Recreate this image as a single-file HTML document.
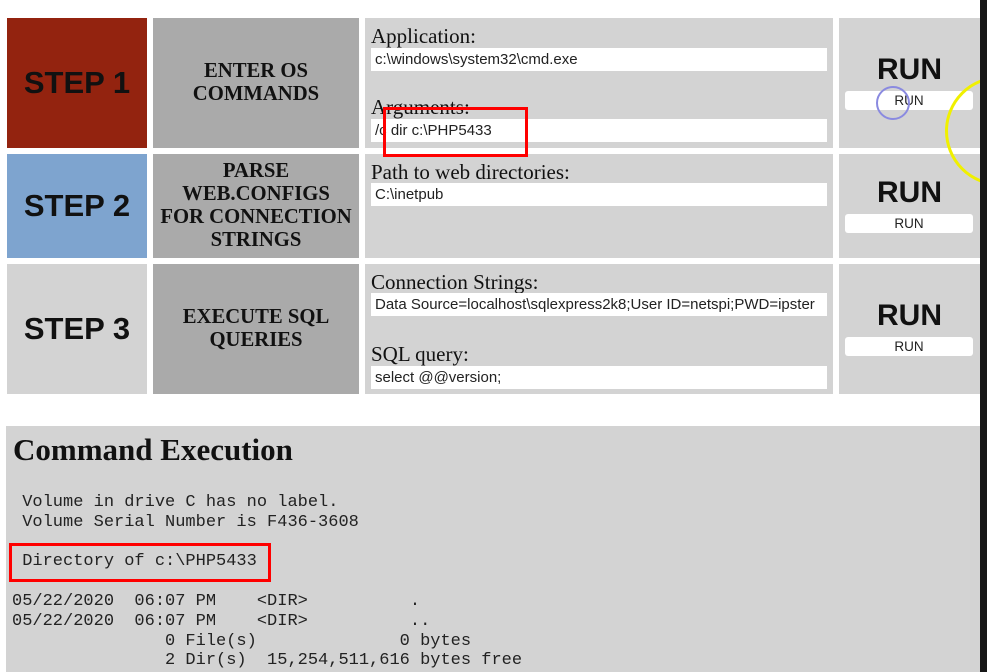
<!DOCTYPE html>
<html><head><style>
*{margin:0;padding:0;box-sizing:border-box}
body{width:987px;height:672px;background:#fff;position:relative;overflow:hidden;font-family:"Liberation Sans",sans-serif}
.a{position:absolute}
.step{font-weight:bold;font-size:31px;color:#111;display:flex;align-items:center;justify-content:center}
.desc{background:#aaaaaa;font-family:"Liberation Serif",serif;font-weight:bold;font-size:20.7px;line-height:23px;text-align:center;display:flex;align-items:center;justify-content:center;color:#111}
.mid{background:#d3d3d3}
.lab{font-family:"Liberation Serif",serif;font-size:21px;color:#111}
.inp{background:#fff;height:23px;font-size:15px;color:#222;padding-left:4px;line-height:23px;white-space:nowrap;overflow:hidden}
.run{font-weight:bold;font-size:30px;color:#111;text-align:center;width:141px}
.btn{background:#fff;border-radius:3px;width:128px;height:19px;font-size:13.5px;line-height:19px;text-align:center;color:#222}
pre{font-family:"Liberation Mono",monospace;font-size:17px;line-height:19.8px;color:#222}
</style></head><body>
<div class="a step" style="left:7px;top:18px;width:140px;height:130px;background:#93230f">STEP 1</div>
<div class="a step" style="left:7px;top:154px;width:140px;height:104px;background:#7ea4cf">STEP 2</div>
<div class="a step" style="left:7px;top:264px;width:140px;height:130px;background:#d3d3d3">STEP 3</div>
<div class="a desc" style="left:153px;top:18px;width:206px;height:130px">ENTER OS<br>COMMANDS</div>
<div class="a desc" style="left:153px;top:154px;width:206px;height:104px">PARSE<br>WEB.CONFIGS<br>FOR CONNECTION<br>STRINGS</div>
<div class="a desc" style="left:153px;top:264px;width:206px;height:130px">EXECUTE SQL<br>QUERIES</div>
<div class="a mid" style="left:365px;top:18px;width:468px;height:130px"></div>
<div class="a mid" style="left:365px;top:154px;width:468px;height:104px"></div>
<div class="a mid" style="left:365px;top:264px;width:468px;height:130px"></div>
<div class="a mid" style="left:839px;top:18px;width:141px;height:130px"></div>
<div class="a mid" style="left:839px;top:154px;width:141px;height:104px"></div>
<div class="a mid" style="left:839px;top:264px;width:141px;height:130px"></div>

<div class="a lab" style="left:371px;top:24px">Application:</div>
<div class="a inp" style="left:371px;top:48px;width:456px">c:\windows\system32\cmd.exe</div>
<div class="a lab" style="left:371px;top:95px">Arguments:</div>
<div class="a inp" style="left:371px;top:119px;width:456px">/c dir c:\PHP5433</div>
<div class="a" style="left:383px;top:107px;width:145px;height:50px;border:3px solid #f00"></div>

<div class="a lab" style="left:371px;top:160px">Path to web directories:</div>
<div class="a inp" style="left:371px;top:183px;width:456px">C:\inetpub</div>

<div class="a lab" style="left:371px;top:270px">Connection Strings:</div>
<div class="a inp" style="left:371px;top:293px;width:456px">Data Source=localhost\sqlexpress2k8;User ID=netspi;PWD=ipster</div>
<div class="a lab" style="left:371px;top:342px">SQL query:</div>
<div class="a inp" style="left:371px;top:366px;width:456px">select @@version;</div>

<div class="a run" style="left:839px;top:53px">RUN</div>
<div class="a btn" style="left:845px;top:91px">RUN</div>
<div class="a run" style="left:839px;top:176px">RUN</div>
<div class="a btn" style="left:845px;top:214px">RUN</div>
<div class="a run" style="left:839px;top:299px">RUN</div>
<div class="a btn" style="left:845px;top:337px">RUN</div>

<div class="a" style="left:876px;top:86px;width:34px;height:34px;border:2px solid #8a8ae0;border-radius:50%"></div>
<div class="a" style="left:945px;top:76px;width:110px;height:110px;border:3px solid #f0f000;border-radius:50%"></div>

<div class="a" style="left:6px;top:426px;width:974px;height:246px;background:#d3d3d3"></div>
<div class="a" style="left:13px;top:432px;font-family:'Liberation Serif',serif;font-weight:bold;font-size:31px;color:#111">Command Execution</div>
<pre class="a" style="left:12px;top:493px">
 Volume in drive C has no label.
 Volume Serial Number is F436-3608

 Directory of c:\PHP5433

05/22/2020  06:07 PM    &lt;DIR&gt;          .
05/22/2020  06:07 PM    &lt;DIR&gt;          ..
               0 File(s)              0 bytes
               2 Dir(s)  15,254,511,616 bytes free</pre>
<div class="a" style="left:9px;top:543px;width:262px;height:39px;border:3px solid #f00"></div>
<div class="a" style="left:980px;top:0;width:7px;height:672px;background:#161616"></div>
</body></html>
